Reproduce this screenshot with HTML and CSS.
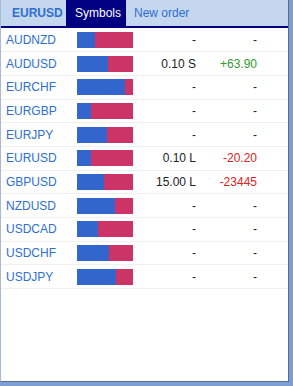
FILE: index.html
```html
<html>
    <head>
        <meta charset="utf-8">
        <link rel="stylesheet" href="styles.css">
        <title>Symbols</title>
    </head>
    <body>
        <div class="frame">
            <div class="tabs">
                <div class="tab tab-sym">EURUSD</div>
                <div class="tab tab-active">Symbols</div>
                <div class="tab tab-order">New order</div>
            </div>
            <table class="list">
                <colgroup>
                    <col class="c-sym"><col class="c-bar"><col class="c-vol"><col class="c-pl"><col class="c-end">
                </colgroup>
                <tr><td class="sym">AUDNZD</td><td><div class="bar"><div class="buy" style="width:32%"></div></div></td><td class="vol">-</td><td class="pl">-</td><td></td></tr>
                <tr><td class="sym">AUDUSD</td><td><div class="bar"><div class="buy" style="width:56%"></div></div></td><td class="vol">0.10 S</td><td class="pl up">+63.90</td><td></td></tr>
                <tr><td class="sym">EURCHF</td><td><div class="bar"><div class="buy" style="width:86%"></div></div></td><td class="vol">-</td><td class="pl">-</td><td></td></tr>
                <tr><td class="sym">EURGBP</td><td><div class="bar"><div class="buy" style="width:25%"></div></div></td><td class="vol">-</td><td class="pl">-</td><td></td></tr>
                <tr><td class="sym">EURJPY</td><td><div class="bar"><div class="buy" style="width:54%"></div></div></td><td class="vol">-</td><td class="pl">-</td><td></td></tr>
                <tr><td class="sym">EURUSD</td><td><div class="bar"><div class="buy" style="width:25%"></div></div></td><td class="vol">0.10 L</td><td class="pl down">-20.20</td><td></td></tr>
                <tr><td class="sym">GBPUSD</td><td><div class="bar"><div class="buy" style="width:49%"></div></div></td><td class="vol">15.00 L</td><td class="pl down">-23445</td><td></td></tr>
                <tr><td class="sym">NZDUSD</td><td><div class="bar"><div class="buy" style="width:68%"></div></div></td><td class="vol">-</td><td class="pl">-</td><td></td></tr>
                <tr><td class="sym">USDCAD</td><td><div class="bar"><div class="buy" style="width:38%"></div></div></td><td class="vol">-</td><td class="pl">-</td><td></td></tr>
                <tr><td class="sym">USDCHF</td><td><div class="bar"><div class="buy" style="width:58%"></div></div></td><td class="vol">-</td><td class="pl">-</td><td></td></tr>
                <tr><td class="sym">USDJPY</td><td><div class="bar"><div class="buy" style="width:70%"></div></div></td><td class="vol">-</td><td class="pl">-</td><td></td></tr>
            </table>
        </div>
    </body>
</html>
```

FILE: styles.css
```css
body {
    margin: 0;
    width: 293px;
    height: 386px;
    background: #7a9fd6;
    font-family: "Liberation Sans", Arial, sans-serif;
}
.frame {
    box-sizing: border-box;
    width: 289px;
    height: 382px;
    background: #ffffff;
    border-left: 1px solid #a9b9cf;
    border-right: 1px solid #5d6b80;
    border-bottom: 1px solid #5d6b80;
}
.tabs {
    display: flex;
    height: 26px;
    background: #c4d7ef;
    border-bottom: 2px solid #000080;
}
.tab {
    display: flex;
    align-items: center;
    padding: 0 8px;
    font-size: 12px;
    color: #2e6fcf;
}
.tab-sym {
    width: 65px;
    box-sizing: border-box;
    padding-left: 11px;
    font-weight: bold;
}
.tab-active {
    background: #000080;
    color: #ffffff;
    width: 60px;
    box-sizing: border-box;
    padding-left: 9px;
}
.list {
    width: 287px;
    table-layout: fixed;
    border-collapse: collapse;
    font-size: 12px;
}
.c-sym { width: 76px; }
.c-bar { width: 58px; }
.c-vol { width: 61px; }
.c-pl { width: 61px; }
.c-end { width: 31px; }
.list td {
    height: 23.7px;
    padding: 0;
    border-bottom: 1px solid #f0f0f0;
}
.list td.sym {
    padding-left: 5px;
    color: #2e6fcf;
}
.bar {
    display: flex;
    width: 56px;
    height: 16px;
    background: #cc3366;
}
.buy {
    background: #3366cc;
}
.vol {
    text-align: right;
    color: #222222;
}
.pl {
    text-align: right;
    color: #222222;
}
.up {
    color: #2e9a2e;
}
.down {
    color: #dd2222;
}
```
